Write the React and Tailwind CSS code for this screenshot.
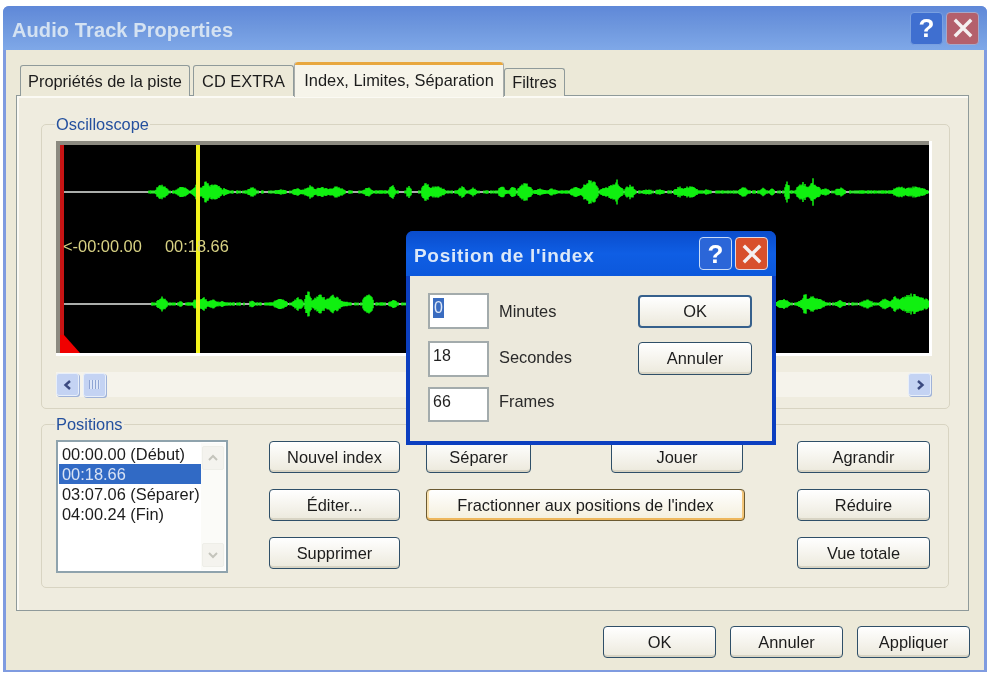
const topBursts = [
  [162,7,9],[182,8,6],[197,6,8],[206,5,12],[214,9,9],[224,6,4],[252,5,6],[280,9,3],[298,9,4],[310,7,7],[322,9,6],[336,11,6],[350,5,2],[368,6,5],[392,4,8],[409,3,8],[426,5,11],[436,11,7],[462,5,6],[473,4,5],[490,6,2],
  [502,5,6],[513,4,7],[525,8,10],[540,7,4],[552,6,4],[576,7,7],[590,9,15],[605,6,6],[614,10,9],[617,2,14],[630,6,8],[647,9,3],[660,9,3],[680,7,6],[690,9,7],[707,5,3],[743,5,6],[763,4,5],[772,4,4],[787,3,12],[803,8,10],[803,1,14],[813,9,10],[813,1,14],[825,6,4],[840,6,5],[867,3,2],[883,4,2.5],[900,9,6],[915,14,6]
];
const bottomBursts = [
  [162,6,8],[180,5,3],[197,5,6],[203,5,8],[213,7,5],[222,5,3],[252,4,4],[280,8,6],[298,6,7],[308,4,15],[320,9,10],[333,10,10],[345,5,3],[368,6,13],[393,5,5],[430,14,6],[470,16,8],[520,12,6],[600,20,7],[680,14,6],[740,12,5],
  [783,8,6],[805,3,12],[812,15,8],[840,7,4],[867,7,5],[885,6,6],[895,5,8],[912,19,11]
];
function wave(bursts, center, seed) {
  let s = seed;
  const rnd = () => { s = (s * 9301 + 49297) % 233280; return s / 233280; };
  let d = '';
  for (let x = 64; x <= 931; x++) {
    let a = x > 148 ? 1.8 : 0;
    for (const [c, w, h] of bursts) {
      const q = 1 - Math.abs(x - c) / w;
      if (q > 0) a = Math.max(a, h * Math.pow(q, 0.5));
    }
    const r = rnd();
    const amp = a * (0.65 + 0.35 * r);
    if (amp > 0.9 && (a > 2 || r > 0.45)) d += `M${x - 56} ${(center - amp).toFixed(1)}V${(center + amp).toFixed(1)}`;
  }
  return d;
}
const topPath = wave(topBursts, 47, 17);
const bottomPath = wave(bottomBursts, 159, 91);

function Waveform() {
  return (
    <svg width="871" height="208" viewBox="4 0 871 208" className="block" aria-hidden="true">
      <path d="M8 47H875M8 159H875" stroke="#e4e8e4" strokeWidth="1.5" />
      <path d={topPath} stroke="#10f010" strokeWidth="1.5" />
      <path d={bottomPath} stroke="#10f010" strokeWidth="1.5" />
      <rect x="4" y="0" width="4" height="208" fill="#c81414" />
      <polygon points="4,190 8,190 24,208 4,208" fill="#f00000" />
      <rect x="140" y="0" width="4" height="208" fill="#f4f41c" />
    </svg>
  );
}

function Btn({ className = '', children, hot = false }) {
  return (
    <button
      className={`h-[32px] rounded-[4px] border border-[#2f4f68] bg-gradient-to-b text-[16.4px] text-[#1c1c1c] shadow-[inset_0_-2px_0_#d8d4c4] ${hot ? 'from-white to-[#f4efdc] border-[#6b5a32] shadow-[inset_0_-2px_0_#eeb75c,inset_2px_0_0_#fbe3b0,inset_-2px_0_0_#f3c67a]' : 'from-white to-[#ece9dc]'} ${className}`}
    >
      {children}
    </button>
  );
}

function CaptionButtons({ faded }) {
  return (
    <div className="flex gap-[3px]">
      <div className={`flex h-[33px] w-[33px] items-center justify-center rounded-[4px] border text-[26px] font-bold leading-none text-white ${faded ? 'border-[#7aa0e0] bg-[#3f6fd0]' : 'border-[#c8dcf8] bg-[#2b66d8]'}`}>?</div>
      <div className={`flex h-[33px] w-[33px] items-center justify-center rounded-[4px] border ${faded ? 'border-[#a8a8c8] bg-[#b4606c]' : 'border-[#e0d8e0] bg-[#d8502c]'}`}>
        <svg width="22" height="22" viewBox="0 0 22 22" aria-hidden="true">
          <path d="M4 4L18 18M18 4L4 18" stroke="#f4f0f0" strokeWidth="3.4" strokeLinecap="square" />
        </svg>
      </div>
    </div>
  );
}

function ScrollBtn({ dir }) {
  return (
    <div className="flex h-[23px] w-[23px] items-center justify-center rounded-[3px] border border-[#e8effa] bg-[#c4d3f3] shadow-[1px_1px_0_#9fb2d8]">
      <svg width="12" height="12" viewBox="0 0 12 12" aria-hidden="true">
        <path d={dir === 'left' ? 'M8 2L3.5 6L8 10' : 'M4 2L8.5 6L4 10'} fill="none" stroke="#3b4a80" strokeWidth="2.4" />
      </svg>
    </div>
  );
}

function Chevron({ up }) {
  return (
    <div className="flex h-[24px] w-[22px] items-center justify-center rounded-[2px] border border-[#eeeee8] bg-[#f4f3ee]">
      <svg width="12" height="10" viewBox="0 0 12 10" aria-hidden="true">
        <path d={up ? 'M2 7L6 3L10 7' : 'M2 3L6 7L10 3'} fill="none" stroke="#c4c4bc" strokeWidth="2" />
      </svg>
    </div>
  );
}

function Tab({ className = '', children }) {
  return (
    <div className={`flex items-center justify-center rounded-t-[3px] border border-b-0 border-[#8f9a9a] bg-[#ece9d8] text-[16.4px] text-[#1c1c1c] ${className}`}>
      {children}
    </div>
  );
}

function Field({ value, selected, className = '' }) {
  return (
    <div className={`box-border w-[61px] border-2 border-[#a3abac] bg-white pl-[3px] pt-[3px] text-[16px] leading-[20px] text-[#222] ${className}`}>
      {selected ? <span className="inline-block bg-[#3a6cc0] px-[1px] text-[#dfe8f8]">{value}</span> : value}
    </div>
  );
}

export default function App() {
  return (
    <div className="relative h-[673px] w-[990px] overflow-hidden bg-white pl-[3px] pr-[3px] pt-[6px] blur-[0.35px] font-['Liberation_Sans',Arial,sans-serif]">
      <div className="flex h-[666px] w-[984px] flex-col rounded-t-[6px] bg-[#7f9be0]">
        {/* title bar */}
        <div className="flex h-[44px] shrink-0 items-center justify-between rounded-t-[6px] bg-gradient-to-b from-[#5f88d8] via-[#6f98de] to-[#7fa8e8] pl-[9px] pr-[8px]">
          <span className="pt-[4px] text-[20px] font-bold tracking-[0.1px] text-[#d4e2f2]">Audio Track Properties</span>
          <CaptionButtons faded />
        </div>

        {/* body */}
        <div className="mx-[3px] mb-[2px] flex flex-1 flex-col bg-[#ece9d8] px-[10px]">
          <div className="relative z-10 ml-[4px] flex h-[45px] items-start pt-[12px]">
            <Tab className="mt-[3px] h-[31px] w-[170px]">Propriétés de la piste</Tab>
            <Tab className="ml-[3px] mt-[3px] h-[31px] w-[101px]">CD EXTRA</Tab>
            <div className="flex h-[35px] w-[210px] flex-col rounded-t-[3px] border-x border-[#a9adab] bg-[#f6f4ea] text-center text-[16.4px] text-[#1c1c1c]">
              <div className="h-[3px] rounded-t-[3px] bg-[#e8a73e]" />
              <span className="pt-[3px]">Index, Limites, Séparation</span>
            </div>
            <Tab className="mt-[6px] h-[28px] w-[61px] text-[15px]">Filtres</Tab>
          </div>

          {/* tab panel */}
          <div className="h-[516px] w-[953px] border border-[#8f9a9a] bg-[#efecdf] px-[24px] pt-[19px] shadow-[inset_2px_2px_0_#fbfaf4]">
            <fieldset className="h-[294px] w-[908px] rounded-[5px] border border-[#d8d4c2] pl-[14px] pr-[17px]">
              <legend className="-ml-[1px] px-[1px] text-[16.4px] leading-[18px] text-[#24509e]">Oscilloscope</legend>

              <div className="mt-[8px] w-[876px] border-b-[3px] border-r-[3px] border-white">
                <div className="relative h-[212px] w-[873px] overflow-hidden border-l-4 border-t-4 border-[#8c8a80] bg-black">
                  <Waveform />
                  <span className="absolute left-[3px] top-[91px] text-[16.4px] leading-[20px] text-[#d8d284]">{'<-00:00.00'}</span>
                  <span className="absolute left-[105px] top-[91px] text-[16.4px] leading-[20px] text-[#d8d284]">00:18.66</span>
                </div>
              </div>

              <div className="mt-[16px] flex h-[25px] w-[875px] items-center bg-[#f5f3eb]">
                <ScrollBtn dir="left" />
                <div className="ml-[4px] flex h-[24px] w-[23px] items-center justify-center rounded-[3px] border border-[#e8effa] bg-[#c4d3f3] shadow-[1px_1px_0_#9fb2d8]">
                  <div className="h-[9px] w-[11px] bg-[repeating-linear-gradient(90deg,#8fa5d4_0,#8fa5d4_1px,#dde6f8_1px,#dde6f8_3px)]" />
                </div>
                <div className="flex-1" />
                <ScrollBtn dir="right" />
              </div>
            </fieldset>

            <fieldset className="mt-[6px] h-[173px] w-[908px] rounded-[5px] border border-[#d8d4c2] pl-[14px]">
              <legend className="-ml-[1px] px-[1px] text-[16.4px] leading-[18px] text-[#24509e]">Positions</legend>

              <div className="flex items-start">
                <div className="mt-[7px] flex h-[133px] w-[172px] border-2 border-[#8fa3ad] bg-white p-[1px]">
                  <div className="w-[142px] text-[16.4px] leading-[20px] text-[#1c1c1c]">
                    <div className="pl-[3px] pt-[1px]">00:00.00 (Début)</div>
                    <div className="bg-[#316ac5] pl-[3px] text-[#d8e2f4]">00:18.66</div>
                    <div className="whitespace-nowrap pl-[3px]">03:07.06 (Séparer)</div>
                    <div className="pl-[3px]">04:00.24 (Fin)</div>
                  </div>
                  <div className="flex flex-1 flex-col items-center justify-between bg-[#fbfbf8] py-[3px]">
                    <Chevron up />
                    <Chevron />
                  </div>
                </div>

                <div className="ml-[41px] mt-[8px] flex w-[131px] flex-col gap-[16px]">
                  <Btn>Nouvel index</Btn>
                  <Btn>Éditer...</Btn>
                  <Btn>Supprimer</Btn>
                </div>

                <div className="ml-[26px] mt-[8px] flex w-[319px] flex-col gap-[16px]">
                  <div className="flex justify-between pr-[2px]">
                    <Btn className="w-[105px]">Séparer</Btn>
                    <Btn className="w-[132px]">Jouer</Btn>
                  </div>
                  <Btn hot>Fractionner aux positions de l'index</Btn>
                </div>

                <div className="ml-[52px] mt-[8px] flex w-[133px] flex-col gap-[16px]">
                  <Btn>Agrandir</Btn>
                  <Btn>Réduire</Btn>
                  <Btn>Vue totale</Btn>
                </div>
              </div>
            </fieldset>
          </div>

          <div className="ml-[587px] mt-[15px] flex gap-[14px]">
            <Btn className="w-[113px]">OK</Btn>
            <Btn className="w-[113px]">Annuler</Btn>
            <Btn className="w-[113px]">Appliquer</Btn>
          </div>
        </div>
      </div>

      {/* modal dialog */}
      <div className="absolute left-[406px] top-[231px] flex h-[214px] w-[370px] flex-col rounded-t-[7px] bg-[#0c3fc0]">
        <div className="flex h-[45px] shrink-0 items-center justify-between rounded-t-[7px] bg-gradient-to-b from-[#0a4ccc] via-[#0f5ee4] to-[#0c58dc] pl-[8px] pr-[8px]">
          <span className="pt-[5px] text-[19px] font-bold tracking-[0.7px] text-[#dce8f8]">Position de l'index</span>
          <CaptionButtons />
        </div>
        <div className="mx-[4px] mb-[4px] flex flex-1 bg-[#ece9dc] pl-[18px] pr-[20px] pt-[17px]">
          <div className="grid grid-cols-[61px_auto] content-start items-center gap-x-[10px] text-[16.4px] text-[#2a2a2a]">
            <Field value="0" selected className="h-[36px]" />
            <span>Minutes</span>
            <Field value="18" className="mt-[12px] h-[36px]" />
            <span className="mt-[8px]">Secondes</span>
            <Field value="66" className="mt-[10px] h-[35px]" />
            <span className="mt-[4px]">Frames</span>
          </div>
          <div className="ml-auto flex w-[114px] flex-col gap-[14px] pt-[2px]">
            <button className="h-[33px] rounded-[4px] border-2 border-[#36608c] bg-gradient-to-b from-white to-[#ece9dc] text-[16.4px] text-[#1c1c1c]">OK</button>
            <Btn className="h-[33px]">Annuler</Btn>
          </div>
        </div>
      </div>
    </div>
  );
}
